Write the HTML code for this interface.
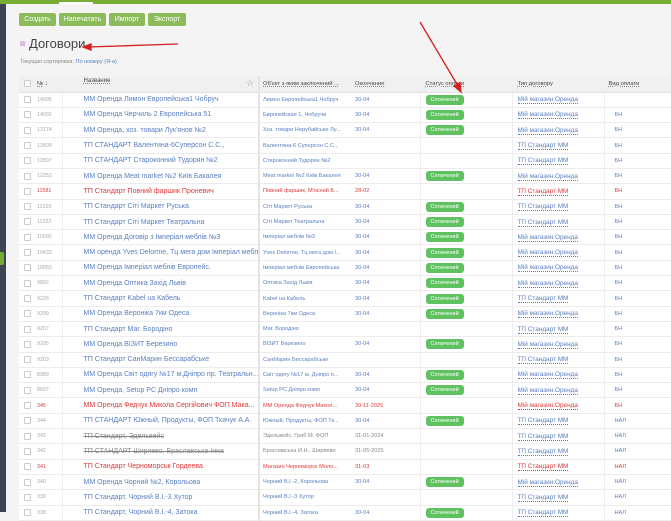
<!DOCTYPE html>
<html><head><meta charset="utf-8"><style>
*{margin:0;padding:0;box-sizing:border-box}
body{width:671px;height:512px;overflow:hidden;background:#f4f4f4;font-family:"Liberation Sans","DejaVu Sans",sans-serif;position:relative}
.top{position:absolute;left:0;top:0;width:671px;height:4px;background:#76ad32}
.top i{position:absolute;left:59px;top:2px;width:34px;height:2px;background:#fff}
.side{position:absolute;left:0;top:4px;width:6px;height:508px;background:#3e4552}
.tab{position:absolute;left:0;top:252px;width:4px;height:13px;background:#76ad32;border-radius:0 2px 2px 0}
.btn{position:absolute;top:13px;height:13px;background:#8bbb5a;color:#fff;font-size:7px;line-height:13px;text-align:center;border-radius:2px}
h1{position:absolute;left:29px;top:36px;font-size:13px;font-weight:normal;color:#444}
.dot{position:absolute;left:20px;top:41px;width:5px;height:5px;background:#e0b8e6}
.sort{position:absolute;left:20px;top:59px;font-size:5.5px;color:#888}
.sort span{color:#5a7fbf}
table{position:absolute;left:19px;top:76px;width:660px;border-collapse:collapse;table-layout:fixed;background:#fff;font-size:6.2px}
td{height:15.3px;border-bottom:1px solid #ececec;white-space:nowrap;overflow:hidden;padding-left:3px;color:#5a7fbf;vertical-align:middle}
tr.h td{height:16px;background:#f0f0f0;color:#444;font-size:5.8px;border-bottom:1px solid #e0e0e0}
tr.h td u{text-decoration:underline dotted #888}
td.c{padding-left:5px}
.cb{display:inline-block;width:7px;height:7px;border:1px solid #ccc;border-radius:1px;background:#fff;vertical-align:middle}
td.n{color:#aaa;font-size:5.3px;padding-left:4px}
td.nm{font-size:7px;padding-left:21px;border-left:1px solid #f0f0f0}
td.o{font-size:5.6px;border-left:2px solid #e4e4e4}
td.e{font-size:5.6px;padding-left:5px}
td.s{border-left:1px solid #eee;padding-left:5px}
td.t{border-left:1px solid #eee;padding-left:5px;font-size:6.4px}
td.t span{border-bottom:1px dotted #5a7fbf}
td.p{border-left:1px solid #eee;padding-left:10px;font-size:5.6px}
.b{display:inline-block;background:#5fc15f;color:#fff;font-size:5.5px;padding:0 5px;height:10px;line-height:10px;border-radius:3px;vertical-align:middle}
tr.r td{color:#e03a3a}tr.r td.n{color:#e03a3a}tr.r td.t span{border-color:#e03a3a}
tr.x td.nm{color:#888;text-decoration:line-through}tr.x td.o,tr.x td.e{color:#888}
</style></head><body>
<div class="top"><i></i></div><div class="side"></div><div class="tab"></div>
<div class="btn" style="left:19px;width:37px">Создать</div>
<div class="btn" style="left:59px;width:47px">Напечатать</div>
<div class="btn" style="left:109px;width:36px">Импорт</div>
<div class="btn" style="left:148px;width:38px">Экспорт</div>
<div class="dot"></div><h1>Договори</h1>
<div class="sort">Текущая сортировка: <span>По номеру (Я-а)</span></div>
<table>
<colgroup><col style="width:14px"><col style="width:29px"><col style="width:197px"><col style="width:91px"><col style="width:70px"><col style="width:92px"><col style="width:92px"><col style="width:75px"></colgroup>
<tr class="h"><td class="c"><span class="cb"></span></td><td class="n" style="color:#444"><u>№</u> ↓</td><td class="nm" style="font-size:6px"><u>Название</u><span style="float:right;margin-right:4px;color:#999;font-size:9px">☆</span></td><td class="o"><u>Об'єкт з яким заключений ...</u></td><td class="e"><u>Окончание</u></td><td class="s"><u>Статус оплати</u></td><td class="t" style="font-size:5.8px"><u>Тип договору</u></td><td class="p" style="padding-left:4px"><u>Вид оплати</u></td></tr>
<tr><td class="c"><span class="cb"></span></td><td class="n">14095</td><td class="nm">ММ Оренда Лимон Европейська1 Чобруч</td><td class="o">Лимон Европейська1 Чобруч</td><td class="e">30-04</td><td class="s"><span class="b">Сплачений</span></td><td class="t"><span>Мій магазин.Оренда</span></td><td class="p"></td></tr>
<tr><td class="c"><span class="cb"></span></td><td class="n">14092</td><td class="nm">ММ Оренда Черчиль 2 Европейська 51</td><td class="o">Европейская 1, Чобручи</td><td class="e">30-04</td><td class="s"><span class="b">Сплачений</span></td><td class="t"><span>Мій магазин.Оренда</span></td><td class="p">БН</td></tr>
<tr><td class="c"><span class="cb"></span></td><td class="n">13174</td><td class="nm">ММ Оренда, хоз. товари Лук'янов №2</td><td class="o">Хоз. товари Нерубайське Лу...</td><td class="e">30-04</td><td class="s"><span class="b">Сплачений</span></td><td class="t"><span>Мій магазин.Оренда</span></td><td class="p">БН</td></tr>
<tr><td class="c"><span class="cb"></span></td><td class="n">12809</td><td class="nm">ТП СТАНДАРТ Валентина-6Суперсон С.С.,</td><td class="o">Валентина-6 Суперсон С.С.,</td><td class="e"></td><td class="s"></td><td class="t"><span>ТП Стандарт ММ</span></td><td class="p">БН</td></tr>
<tr><td class="c"><span class="cb"></span></td><td class="n">12807</td><td class="nm">ТП СТАНДАРТ Староконний Тудорян №2</td><td class="o">Староконний Тудорян №2</td><td class="e"></td><td class="s"></td><td class="t"><span>ТП Стандарт ММ</span></td><td class="p">БН</td></tr>
<tr><td class="c"><span class="cb"></span></td><td class="n">12253</td><td class="nm">ММ Оренда Meat market №2 Київ Бакалея</td><td class="o">Meat market №2 Київ Бакалея</td><td class="e">30-04</td><td class="s"><span class="b">Сплачений</span></td><td class="t"><span>Мій магазин.Оренда</span></td><td class="p">БН</td></tr>
<tr class="r"><td class="c"><span class="cb"></span></td><td class="n">11581</td><td class="nm">ТП Стандарт Повний фаршик Проневич</td><td class="o">Повний фаршик, М'ясний Б...</td><td class="e">28-02</td><td class="s"></td><td class="t"><span>ТП Стандарт ММ</span></td><td class="p">БН</td></tr>
<tr><td class="c"><span class="cb"></span></td><td class="n">11329</td><td class="nm">ТП Стандарт Сіті Маркет Руська</td><td class="o">Сіті Маркет Руська</td><td class="e">30-04</td><td class="s"><span class="b">Сплачений</span></td><td class="t"><span>ТП Стандарт ММ</span></td><td class="p">БН</td></tr>
<tr><td class="c"><span class="cb"></span></td><td class="n">11322</td><td class="nm">ТП Стандарт Сіті Маркет Театральна</td><td class="o">Сіті Маркет Театральна</td><td class="e">30-04</td><td class="s"><span class="b">Сплачений</span></td><td class="t"><span>ТП Стандарт ММ</span></td><td class="p">БН</td></tr>
<tr><td class="c"><span class="cb"></span></td><td class="n">10590</td><td class="nm">ММ Оренда Договір з Імперіал меблів №3</td><td class="o">Імперіал меблів №3</td><td class="e">30-04</td><td class="s"><span class="b">Сплачений</span></td><td class="t"><span>Мій магазин.Оренда</span></td><td class="p">БН</td></tr>
<tr><td class="c"><span class="cb"></span></td><td class="n">10433</td><td class="nm">ММ оренда Yves Delorme, Тц мега дом Імперіал мебл...</td><td class="o">Yves Delorme, Тц мега дом І...</td><td class="e">30-04</td><td class="s"><span class="b">Сплачений</span></td><td class="t"><span>Мій магазин.Оренда</span></td><td class="p">БН</td></tr>
<tr><td class="c"><span class="cb"></span></td><td class="n">10050</td><td class="nm">ММ Оренда Імперіал меблів Европейс.</td><td class="o">Імперіал меблів Европейська</td><td class="e">30-04</td><td class="s"><span class="b">Сплачений</span></td><td class="t"><span>Мій магазин.Оренда</span></td><td class="p">БН</td></tr>
<tr><td class="c"><span class="cb"></span></td><td class="n">9892</td><td class="nm">ММ Оренда Оптика Захід Львів</td><td class="o">Оптика Захід Львів</td><td class="e">30-04</td><td class="s"><span class="b">Сплачений</span></td><td class="t"><span>Мій магазин.Оренда</span></td><td class="p">БН</td></tr>
<tr><td class="c"><span class="cb"></span></td><td class="n">9226</td><td class="nm">ТП Стандарт Kabel ua Кабель</td><td class="o">Kabel ua Кабель</td><td class="e">30-04</td><td class="s"><span class="b">Сплачений</span></td><td class="t"><span>ТП Стандарт ММ</span></td><td class="p">БН</td></tr>
<tr><td class="c"><span class="cb"></span></td><td class="n">9209</td><td class="nm">ММ Оренда Вероніка 7км Одеса</td><td class="o">Вероніка 7км Одеса</td><td class="e">30-04</td><td class="s"><span class="b">Сплачений</span></td><td class="t"><span>Мій магазин.Оренда</span></td><td class="p">БН</td></tr>
<tr><td class="c"><span class="cb"></span></td><td class="n">9207</td><td class="nm">ТП Стандарт Маг. Бородіно</td><td class="o">Маг. Бородіно</td><td class="e"></td><td class="s"></td><td class="t"><span>ТП Стандарт ММ</span></td><td class="p">БН</td></tr>
<tr><td class="c"><span class="cb"></span></td><td class="n">9205</td><td class="nm">ММ Оренда ВІЗИТ Березино</td><td class="o">ВІЗИТ Березино</td><td class="e">30-04</td><td class="s"><span class="b">Сплачений</span></td><td class="t"><span>Мій магазин.Оренда</span></td><td class="p">БН</td></tr>
<tr><td class="c"><span class="cb"></span></td><td class="n">9203</td><td class="nm">ТП Стандарт СанМарин Бессарабське</td><td class="o">СанМарин Бессарабське</td><td class="e"></td><td class="s"></td><td class="t"><span>ТП Стандарт ММ</span></td><td class="p">БН</td></tr>
<tr><td class="c"><span class="cb"></span></td><td class="n">8989</td><td class="nm">ММ Оренда Світ одягу №17 м.Дніпро пр. Театральн...</td><td class="o">Світ одягу №17 м. Дніпро п...</td><td class="e">30-04</td><td class="s"><span class="b">Сплачений</span></td><td class="t"><span>Мій магазин.Оренда</span></td><td class="p">БН</td></tr>
<tr><td class="c"><span class="cb"></span></td><td class="n">8607</td><td class="nm">ММ Оренда, Setup PC Дніпро комп</td><td class="o">Setup PC Дніпро комп</td><td class="e">30-04</td><td class="s"><span class="b">Сплачений</span></td><td class="t"><span>Мій магазин.Оренда</span></td><td class="p">БН</td></tr>
<tr class="r"><td class="c"><span class="cb"></span></td><td class="n">345</td><td class="nm">ММ Оренда Федчук Микола Сергійович ФОП Мака...</td><td class="o">ММ Оренда Федчук Микол...</td><td class="e">30-11-2025</td><td class="s"></td><td class="t"><span>Мій магазин.Оренда</span></td><td class="p">БН</td></tr>
<tr><td class="c"><span class="cb"></span></td><td class="n">344</td><td class="nm">ТП СТАНДАРТ Южный, Продукты, ФОП Ткачук А.А.</td><td class="o">Южный, Продукты, ФОП Тк...</td><td class="e">30-04</td><td class="s"><span class="b">Сплачений</span></td><td class="t"><span>ТП Стандарт ММ</span></td><td class="p">НАЛ</td></tr>
<tr class="x"><td class="c"><span class="cb"></span></td><td class="n">343</td><td class="nm">ТП Стандарт, Эдельвейс</td><td class="o">Эдельвейс, Гриб М. ФОП</td><td class="e">31-01-2024</td><td class="s"></td><td class="t"><span>ТП Стандарт ММ</span></td><td class="p">НАЛ</td></tr>
<tr class="x"><td class="c"><span class="cb"></span></td><td class="n">342</td><td class="nm">ТП СТАНДАРТ Ширяево, Браславська Інна</td><td class="o">Браславська И.Н., Ширяево</td><td class="e">31-05-2025</td><td class="s"></td><td class="t"><span>ТП Стандарт ММ</span></td><td class="p">НАЛ</td></tr>
<tr class="r"><td class="c"><span class="cb"></span></td><td class="n">341</td><td class="nm">ТП Стандарт Черноморськ Гордеева</td><td class="o">Магазин Черноморск Моло...</td><td class="e">31-03</td><td class="s"></td><td class="t"><span>ТП Стандарт ММ</span></td><td class="p">НАЛ</td></tr>
<tr><td class="c"><span class="cb"></span></td><td class="n">340</td><td class="nm">ММ Оренда Чорний №2, Корольова</td><td class="o">Чорний B.I.-2, Корольова</td><td class="e">30-04</td><td class="s"><span class="b">Сплачений</span></td><td class="t"><span>Мій магазин.Оренда</span></td><td class="p">НАЛ</td></tr>
<tr><td class="c"><span class="cb"></span></td><td class="n">339</td><td class="nm">ТП Стандарт, Чорний B.I.-3 Хутор</td><td class="o">Чорний B.I.-3 Хутор</td><td class="e"></td><td class="s"></td><td class="t"><span>ТП Стандарт ММ</span></td><td class="p">НАЛ</td></tr>
<tr><td class="c"><span class="cb"></span></td><td class="n">338</td><td class="nm">ТП Стандарт, Чорний B.I.-4, Затока</td><td class="o">Чорний B.I.-4. Затока</td><td class="e">30-04</td><td class="s"><span class="b">Сплачений</span></td><td class="t"><span>ТП Стандарт ММ</span></td><td class="p">НАЛ</td></tr>
</table>
<svg style="position:absolute;left:0;top:0" width="671" height="512">
<g stroke="#d42020" stroke-width="1.3" fill="#d42020">
<line x1="178" y1="44" x2="88" y2="47"/><polygon points="83,47 91,44 91,50"/>
<line x1="420" y1="22" x2="458" y2="86"/><polygon points="461,92 454,86 460,83"/>
</g></svg>
</body></html>
